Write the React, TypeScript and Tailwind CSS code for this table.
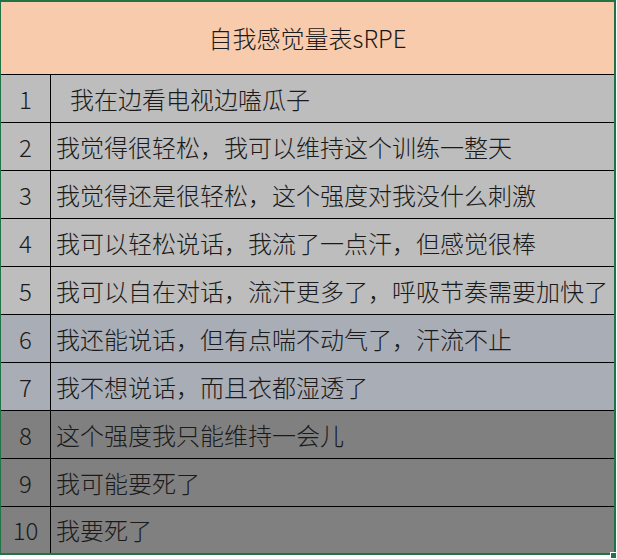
const rows: { n: number; text: string; bg: string; indent?: boolean }[] = [
  { n: 1, text: "我在边看电视边嗑瓜子", bg: "bg-[#bdbdbd]", indent: true },
  { n: 2, text: "我觉得很轻松，我可以维持这个训练一整天", bg: "bg-[#bdbdbd]" },
  { n: 3, text: "我觉得还是很轻松，这个强度对我没什么刺激", bg: "bg-[#bdbdbd]" },
  { n: 4, text: "我可以轻松说话，我流了一点汗，但感觉很棒", bg: "bg-[#bdbdbd]" },
  { n: 5, text: "我可以自在对话，流汗更多了，呼吸节奏需要加快了", bg: "bg-[#bdbdbd]" },
  { n: 6, text: "我还能说话，但有点喘不动气了，汗流不止", bg: "bg-[#a9adb5]" },
  { n: 7, text: "我不想说话，而且衣都湿透了", bg: "bg-[#a9adb5]" },
  { n: 8, text: "这个强度我只能维持一会儿", bg: "bg-[#808080]" },
  { n: 9, text: "我可能要死了", bg: "bg-[#808080]" },
  { n: 10, text: "我要死了", bg: "bg-[#808080]" },
];

export default function App() {
  return (
    <div
      className="relative w-[617px] h-[559px] bg-white text-[#1a1a1a] overflow-hidden"
      style={{ fontFamily: '"Noto Sans CJK SC", "Noto Sans", sans-serif' }}
    >
      <div className="w-[616px] border-t-2 border-l border-r-2 border-b-2 border-[#217346]">
        {/* header */}
        <div className="h-[73px] bg-[#f8cbac] border-b border-black flex items-center justify-center text-[24px] font-light leading-none">
          自我感觉量表sRPE
        </div>

        {rows.map((r, i) => (
          <div
            key={r.n}
            className={`flex ${r.bg} ${i === rows.length - 1 ? "h-[46px]" : "h-[48px] border-b border-black"}`}
          >
            <div className="w-[50px] shrink-0 border-r border-black flex items-center justify-center text-[24px] font-light leading-none">
              {r.n}
            </div>
            <div
              className={`flex-1 flex items-center whitespace-nowrap text-[24px] font-light leading-none ${
                r.indent ? "pl-[19px]" : "pl-[5px]"
              }`}
            >
              {r.text}
            </div>
          </div>
        ))}
      </div>
      {/* selection handle */}
      <div className="absolute right-0 bottom-0 w-[7px] h-[7px] bg-[#217346] border border-white" />
    </div>
  );
}
